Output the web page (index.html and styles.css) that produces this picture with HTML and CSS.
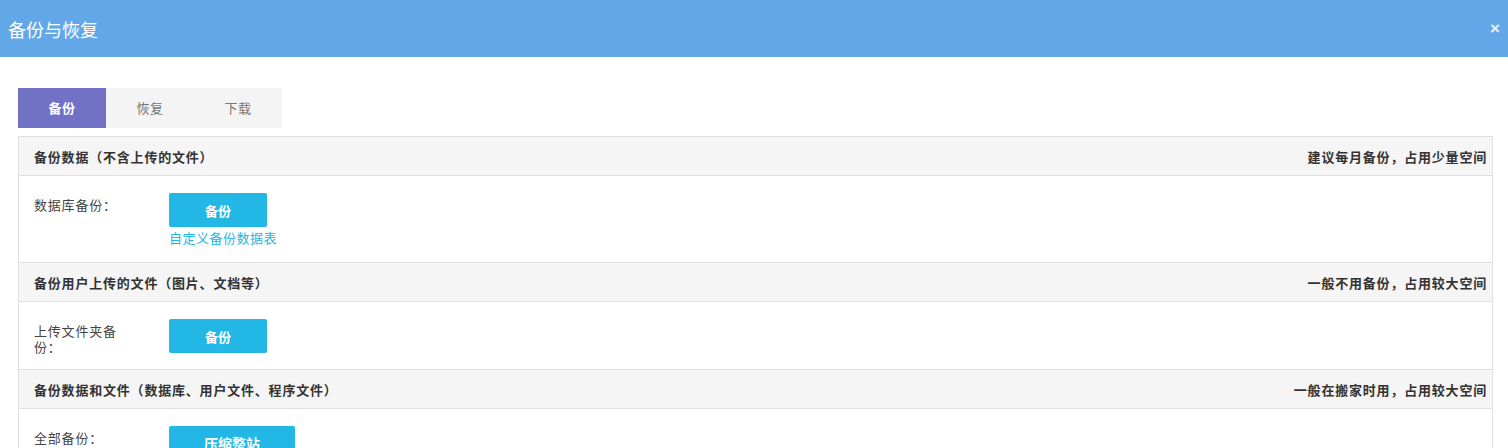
FILE: index.html
```html
<!DOCTYPE html>
<html lang="zh-CN">
<head>
    <meta charset="UTF-8">
    <title>备份与恢复</title>
    <link rel="stylesheet" href="styles.css">
</head>
<body>
    <div class="modal-header">
        <h3>备份与恢复</h3>
        <span class="close">&times;</span>
    </div>

    <div class="modal-body">
        <div class="tabs">
            <a class="tab active">备份</a>
            <a class="tab">恢复</a>
            <a class="tab">下载</a>
        </div>

        <div class="panel">
            <div class="panel-head">
                <span>备份数据（不含上传的文件）</span>
                <span>建议每月备份，占用少量空间</span>
            </div>
            <div class="panel-row">
                <div class="label">数据库备份：</div>
                <div class="ctrl">
                    <button class="btn">备份</button>
                    <a class="link">自定义备份数据表</a>
                </div>
            </div>

            <div class="panel-head">
                <span>备份用户上传的文件（图片、文档等）</span>
                <span>一般不用备份，占用较大空间</span>
            </div>
            <div class="panel-row">
                <div class="label">上传文件夹备份：</div>
                <div class="ctrl">
                    <button class="btn">备份</button>
                </div>
            </div>

            <div class="panel-head">
                <span>备份数据和文件（数据库、用户文件、程序文件）</span>
                <span>一般在搬家时用，占用较大空间</span>
            </div>
            <div class="panel-row">
                <div class="label">全部备份：</div>
                <div class="ctrl">
                    <button class="btn wide">压缩整站</button>
                </div>
            </div>
        </div>
    </div>
</body>
</html>
```

FILE: styles.css
```css
body {
    margin: 0;
    font-family: "Noto Sans CJK SC", "Liberation Sans", sans-serif;
    font-size: 13px;
    color: #333;
    background: #fff;
    text-spacing-trim: space-all;
    font-feature-settings: "chws" 0, "halt" 0, "palt" 0;
}
.modal-header {
    height: 57px;
    background: #62a8e9;
    display: flex;
    align-items: center;
    justify-content: space-between;
    padding: 0 8px 0 8px;
}
.modal-header h3 {
    margin: 0;
    color: #fff;
    font-size: 18px;
    font-weight: normal;
}
.close {
    color: #e6f1fc;
    font-family: "Liberation Sans", sans-serif;
    font-size: 17px;
    font-weight: bold;
    line-height: 1;
}
.modal-body {
    padding: 31px 15px 0 18px;
}
.tabs {
    display: flex;
    margin-bottom: 8px;
}
.tab {
    width: 88px;
    height: 40px;
    line-height: 40px;
    text-align: center;
    background: #f4f4f4;
    color: #777;
    letter-spacing: 0.5px;
}
.tab.active {
    background: #7171c6;
    color: #fff;
    font-weight: bold;
}
.panel {
    border: 1px solid #e0e0e0;
    border-bottom: none;
}
.panel-head {
    height: 38px;
    display: flex;
    align-items: center;
    justify-content: space-between;
    padding: 0 5px 0 15px;
    background: #f5f5f5;
    border-bottom: 1px solid #e0e0e0;
    font-weight: bold;
    color: #333;
    letter-spacing: 0.8px;
}
.panel-row {
    display: flex;
    padding: 17px 15px 16px;
    border-bottom: 1px solid #e0e0e0;
}
.label {
    width: 90px;
    margin-right: 45px;
    padding-top: 4px;
    margin-bottom: -4px;
    line-height: 16px;
    color: #444;
    letter-spacing: 0.8px;
}
.ctrl {
    display: flex;
    flex-direction: column;
    align-items: flex-start;
}
.btn {
    width: 98px;
    height: 34px;
    border: none;
    border-radius: 2px;
    background: #23b7e5;
    color: #fff;
    font-family: inherit;
    font-size: 13px;
    font-weight: bold;
    cursor: pointer;
}
.btn.wide {
    width: 126px;
    font-size: 14px;
}
.link {
    margin-top: 3px;
    color: #23b7e5;
    line-height: 16px;
    letter-spacing: 0.5px;
}
```
